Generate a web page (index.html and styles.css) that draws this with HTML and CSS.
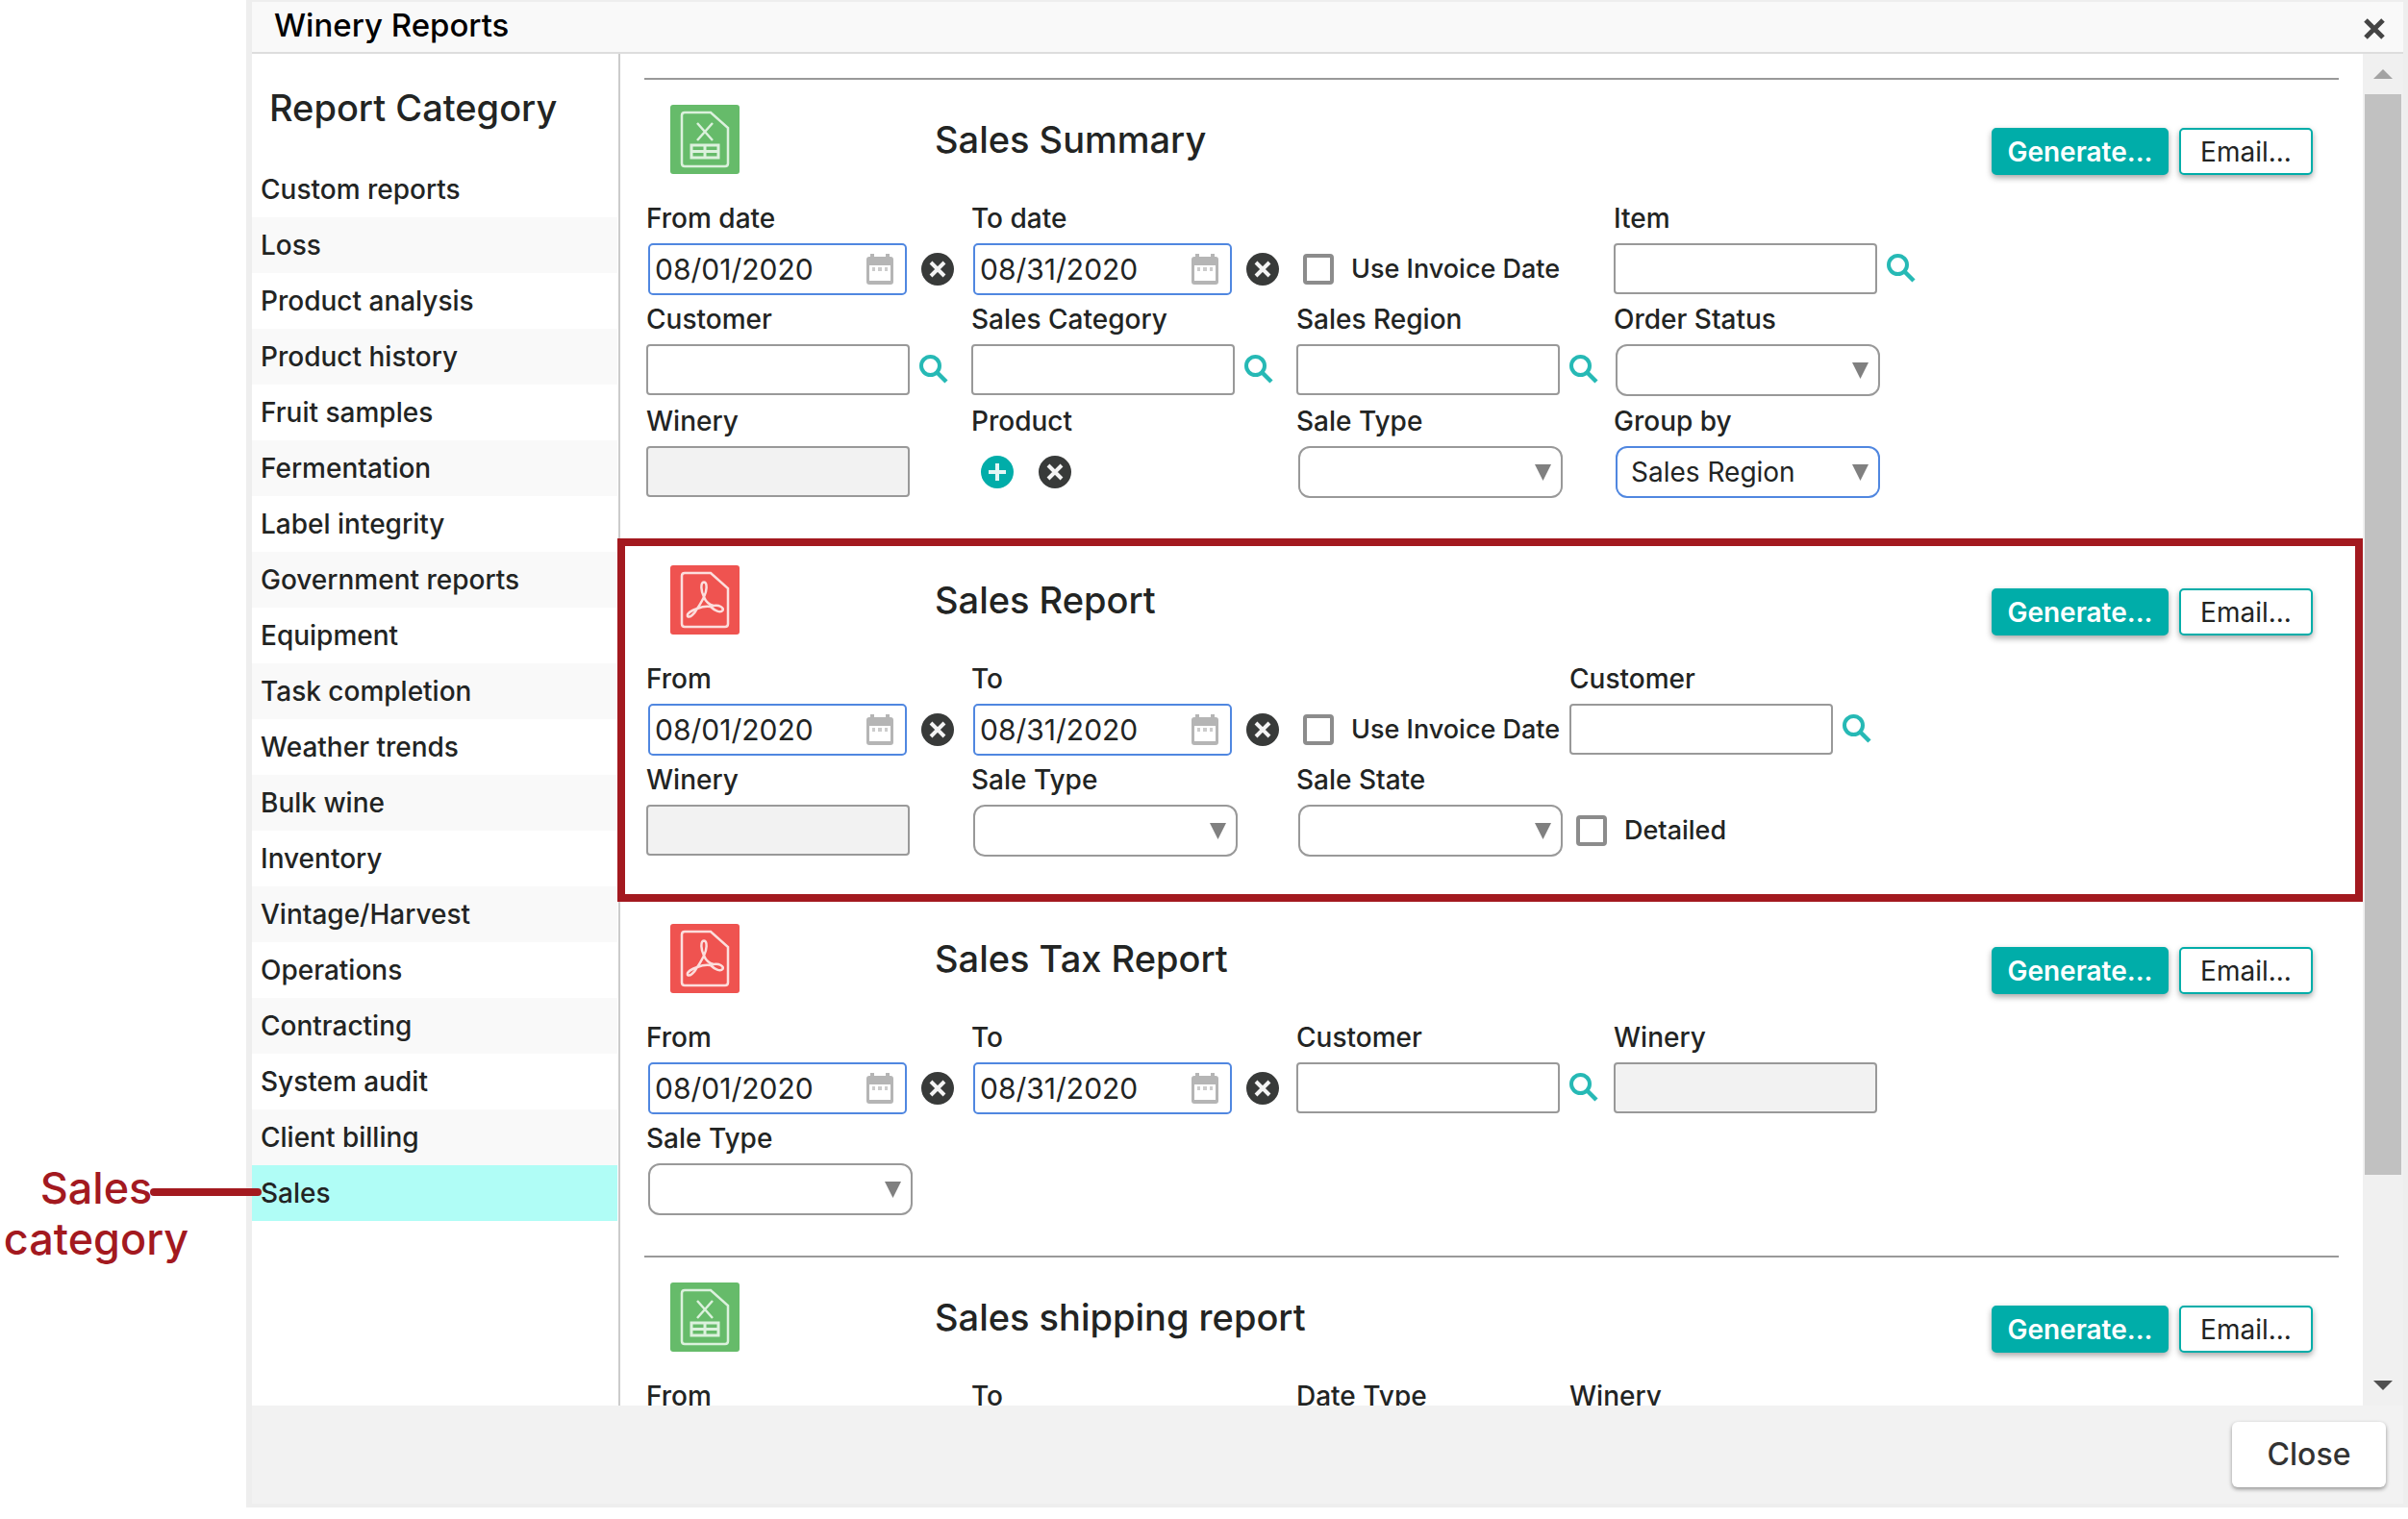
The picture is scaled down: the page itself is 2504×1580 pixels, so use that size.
FILE: index.html
```html
<!DOCTYPE html>
<html lang="en">
<head>
<meta charset="utf-8">
<title>Winery Reports</title>
<link rel="stylesheet" href="styles.css">
</head>
<body>
<svg class="sprite" aria-hidden="true">
  <symbol id="i-xls" viewBox="0 0 72 72">
    <rect width="72" height="72" rx="3" fill="#66bb6a"/>
    <g fill="none" stroke="#dcf1dd" stroke-width="2.500">
      <path d="M15 8H42L60 24V61Q60 64 57 64H15Q12 64 12 61V11Q12 8 15 8Z"/>
      <path d="M28 19L44 37M44 19L28 37"/>
      <path d="M22 42H50V55H22ZM22 48.500H50M36 42V55" stroke-width="3"/>
    </g>
  </symbol>
  <symbol id="i-pdf" viewBox="0 0 72 72">
    <rect width="72" height="72" rx="3" fill="#ef5350"/>
    <g fill="none" stroke="#fcdedd" stroke-width="2.500">
      <path d="M15 8H42L60 24V61Q60 64 57 64H15Q12 64 12 61V11Q12 8 15 8Z"/>
      <path d="M35 33C32 27 31 18 35 17.500C39 18 38 27 35 33C37 38 41 41 45 42C51 41 56 44 54.500 47C52 50 46 47 42 43C37 42 33 43 28 45C25 51 20 55 18 53C17 50 22 47 28 45C31 41 33 37 35 33Z"/>
    </g>
  </symbol>
  <symbol id="i-cal" viewBox="0 0 28 32">
    <path d="M4 0H8V3H20V0H24V3H25Q28 3 28 6V29Q28 32 25 32H3Q0 32 0 29V6Q0 3 3 3H4Z" fill="#b5b5b5"/>
    <path d="M3 12H25V28H3Z" fill="#fff"/>
    <path d="M6 14H9V18H6ZM12 14H16V18H12ZM19 14H22V18H19Z" fill="#ccc"/>
  </symbol>
  <symbol id="i-clear" viewBox="0 0 36 36">
    <circle cx="18" cy="18" r="17" fill="#383a39"/>
    <path d="M11 11L25 25M25 11L11 25" stroke="#f4f4f4" stroke-width="4"/>
  </symbol>
  <symbol id="i-add" viewBox="0 0 36 36">
    <circle cx="18" cy="18" r="17" fill="#00ada9"/>
    <path d="M18 9V27M9 18H27" stroke="#e4f7f6" stroke-width="4"/>
  </symbol>
  <symbol id="i-search" viewBox="0 0 30 30">
    <circle cx="11.500" cy="11.500" r="9.500" fill="none" stroke="#26b9b5" stroke-width="4"/>
    <path d="M18.500 18.500L28 28" stroke="#26b9b5" stroke-width="4.500"/>
  </symbol>
  <symbol id="i-x" viewBox="0 0 22 22">
    <path d="M2 2L20 20M20 2L2 20" stroke="#444" stroke-width="5"/>
  </symbol>
</svg>

<div class="page">
  <aside class="note">
    <p class="note-text">Sales<br>category</p>
    <span class="note-line"></span>
  </aside>

  <div class="dialog" role="dialog" aria-labelledby="dialog-title">
    <header class="dialog-head">
      <h1 id="dialog-title">Winery Reports</h1>
      <button class="icon-btn" type="button" aria-label="Close dialog"><svg class="ico-x"><use href="#i-x"/></svg></button>
    </header>

    <div class="dialog-body">
      <nav class="categories">
        <h2>Report Category</h2>
        <ul>
          <li><a href="#">Custom reports</a></li>
          <li><a href="#">Loss</a></li>
          <li><a href="#">Product analysis</a></li>
          <li><a href="#">Product history</a></li>
          <li><a href="#">Fruit samples</a></li>
          <li><a href="#">Fermentation</a></li>
          <li><a href="#">Label integrity</a></li>
          <li><a href="#">Government reports</a></li>
          <li><a href="#">Equipment</a></li>
          <li><a href="#">Task completion</a></li>
          <li><a href="#">Weather trends</a></li>
          <li><a href="#">Bulk wine</a></li>
          <li><a href="#">Inventory</a></li>
          <li><a href="#">Vintage/Harvest</a></li>
          <li><a href="#">Operations</a></li>
          <li><a href="#">Contracting</a></li>
          <li><a href="#">System audit</a></li>
          <li><a href="#">Client billing</a></li>
          <li class="current"><a href="#" aria-current="page">Sales</a></li>
        </ul>
      </nav>

      <main class="reports">
        <section class="report">
          <div class="report-head">
            <svg class="ico-file"><use href="#i-xls"/></svg>
            <h3>Sales Summary</h3>
            <div class="actions"><button class="btn primary" type="button">Generate...</button><button class="btn" type="button">Email...</button></div>
          </div>
          <div class="fields">
            <div class="field"><label for="a1">From date</label><div class="control"><span class="date"><input id="a1" type="text" value="08/01/2020"><svg class="ico-cal"><use href="#i-cal"/></svg></span><button class="icon-btn clear" type="button" aria-label="Clear"><svg class="ico-round"><use href="#i-clear"/></svg></button></div></div>
            <div class="field"><label for="a2">To date</label><div class="control"><span class="date"><input id="a2" type="text" value="08/31/2020"><svg class="ico-cal"><use href="#i-cal"/></svg></span><button class="icon-btn clear" type="button" aria-label="Clear"><svg class="ico-round"><use href="#i-clear"/></svg></button></div></div>
            <label class="check"><input type="checkbox">Use Invoice Date</label>
            <div class="field"><label for="a3">Item</label><div class="control"><input id="a3" class="text" type="text"><button class="icon-btn find" type="button" aria-label="Search"><svg class="ico-find"><use href="#i-search"/></svg></button></div></div>

            <div class="field"><label for="a4">Customer</label><div class="control"><input id="a4" class="text" type="text"><button class="icon-btn find" type="button" aria-label="Search"><svg class="ico-find"><use href="#i-search"/></svg></button></div></div>
            <div class="field"><label for="a5">Sales Category</label><div class="control"><input id="a5" class="text" type="text"><button class="icon-btn find" type="button" aria-label="Search"><svg class="ico-find"><use href="#i-search"/></svg></button></div></div>
            <div class="field"><label for="a6">Sales Region</label><div class="control"><input id="a6" class="text" type="text"><button class="icon-btn find" type="button" aria-label="Search"><svg class="ico-find"><use href="#i-search"/></svg></button></div></div>
            <div class="field"><label for="a7">Order Status</label><div class="control"><span class="drop"><select id="a7"><option></option></select></span></div></div>

            <div class="field"><label for="a8">Winery</label><div class="control"><input id="a8" class="text" type="text" disabled></div></div>
            <div class="field" role="group" aria-labelledby="a9"><span id="a9" class="label">Product</span><div class="control pair"><button class="icon-btn" type="button" aria-label="Add product"><svg class="ico-round"><use href="#i-add"/></svg></button><button class="icon-btn" type="button" aria-label="Clear products"><svg class="ico-round"><use href="#i-clear"/></svg></button></div></div>
            <div class="field"><label for="a10">Sale Type</label><div class="control"><span class="drop"><select id="a10"><option></option></select></span></div></div>
            <div class="field"><label for="a11">Group by</label><div class="control"><span class="drop set"><select id="a11"><option>Sales Region</option></select></span></div></div>
          </div>
        </section>

        <section class="report highlighted">
          <div class="report-head">
            <svg class="ico-file"><use href="#i-pdf"/></svg>
            <h3>Sales Report</h3>
            <div class="actions"><button class="btn primary" type="button">Generate...</button><button class="btn" type="button">Email...</button></div>
          </div>
          <div class="fields tight">
            <div class="field"><label for="b1">From</label><div class="control"><span class="date"><input id="b1" type="text" value="08/01/2020"><svg class="ico-cal"><use href="#i-cal"/></svg></span><button class="icon-btn clear" type="button" aria-label="Clear"><svg class="ico-round"><use href="#i-clear"/></svg></button></div></div>
            <div class="field"><label for="b2">To</label><div class="control"><span class="date"><input id="b2" type="text" value="08/31/2020"><svg class="ico-cal"><use href="#i-cal"/></svg></span><button class="icon-btn clear" type="button" aria-label="Clear"><svg class="ico-round"><use href="#i-clear"/></svg></button></div></div>
            <label class="check"><input type="checkbox">Use Invoice Date</label>
            <div class="field"><label for="b3">Customer</label><div class="control"><input id="b3" class="text" type="text"><button class="icon-btn find" type="button" aria-label="Search"><svg class="ico-find"><use href="#i-search"/></svg></button></div></div>

            <div class="field"><label for="b4">Winery</label><div class="control"><input id="b4" class="text" type="text" disabled></div></div>
            <div class="field"><label for="b5">Sale Type</label><div class="control"><span class="drop"><select id="b5"><option></option></select></span></div></div>
            <div class="field"><label for="b6">Sale State</label><div class="control"><span class="drop"><select id="b6"><option></option></select></span></div></div>
            <label class="check"><input type="checkbox">Detailed</label>
          </div>
        </section>

        <section class="report">
          <div class="report-head">
            <svg class="ico-file"><use href="#i-pdf"/></svg>
            <h3>Sales Tax Report</h3>
            <div class="actions"><button class="btn primary" type="button">Generate...</button><button class="btn" type="button">Email...</button></div>
          </div>
          <div class="fields">
            <div class="field"><label for="c1">From</label><div class="control"><span class="date"><input id="c1" type="text" value="08/01/2020"><svg class="ico-cal"><use href="#i-cal"/></svg></span><button class="icon-btn clear" type="button" aria-label="Clear"><svg class="ico-round"><use href="#i-clear"/></svg></button></div></div>
            <div class="field"><label for="c2">To</label><div class="control"><span class="date"><input id="c2" type="text" value="08/31/2020"><svg class="ico-cal"><use href="#i-cal"/></svg></span><button class="icon-btn clear" type="button" aria-label="Clear"><svg class="ico-round"><use href="#i-clear"/></svg></button></div></div>
            <div class="field"><label for="c3">Customer</label><div class="control"><input id="c3" class="text" type="text"><button class="icon-btn find" type="button" aria-label="Search"><svg class="ico-find"><use href="#i-search"/></svg></button></div></div>
            <div class="field"><label for="c4">Winery</label><div class="control"><input id="c4" class="text" type="text" disabled></div></div>

            <div class="field"><label for="c5">Sale Type</label><div class="control"><span class="drop"><select id="c5"><option></option></select></span></div></div>
          </div>
        </section>

        <section class="report">
          <div class="report-head">
            <svg class="ico-file"><use href="#i-xls"/></svg>
            <h3>Sales shipping report</h3>
            <div class="actions"><button class="btn primary" type="button">Generate...</button><button class="btn" type="button">Email...</button></div>
          </div>
          <div class="fields tight">
            <div class="field"><label for="d1">From</label><div class="control"><span class="date"><input id="d1" type="text"></span></div></div>
            <div class="field"><label for="d2">To</label><div class="control"><span class="date"><input id="d2" type="text"></span></div></div>
            <div class="field"><label for="d3">Date Type</label><div class="control"><span class="drop"><select id="d3"><option></option></select></span></div></div>
            <div class="field"><label for="d4">Winery</label><div class="control"><input id="d4" class="text" type="text" disabled></div></div>
          </div>
        </section>
      </main>

      <div class="scrollbar" aria-hidden="true">
        <span class="arrow up"></span>
        <span class="track"><span class="thumb"></span></span>
        <span class="arrow down"></span>
      </div>
    </div>

    <footer class="dialog-foot"><button class="close-btn" type="button">Close</button></footer>
  </div>
</div>
</body>
</html>
```
FILE: styles.css
```css
* { box-sizing: border-box; }

body {
  margin: 0;
  background: #fff;
  color: #222423;
  font: 500 28px/36px Inter, "Liberation Sans", sans-serif;
}

h1, h2, h3, p, ul { margin: 0; padding: 0; font-weight: 500; }
ul { list-style: none; }
a { color: inherit; text-decoration: none; }
svg { display: block; }
input, select, button { margin: 0; font: inherit; color: inherit; }
.sprite { position: absolute; width: 0; height: 0; }

.page {
  display: grid;
  grid-template-columns: 256px 1fr;
  height: 100vh;
  padding-bottom: 12px;
}

/* callout beside the dialog */
.note { position: relative; z-index: 2; padding: 1209px 56px 0 0; }
.note-text {
  color: #a3191f;
  font-size: 45px;
  line-height: 53px;
  text-align: center;
}
.note-line {
  position: absolute;
  top: 1236px;
  left: 156px;
  width: 116px;
  height: 8px;
  border-radius: 4px;
  background: #a3191f;
}

.dialog {
  display: flex;
  flex-direction: column;
  min-width: 0;
  min-height: 0;
  border: solid #eee;
  border-width: 2px 5px 4px 6px;
}
.dialog-head {
  display: flex;
  flex: none;
  align-items: center;
  justify-content: space-between;
  height: 54px;
  padding: 4px 19px 0 23px;
  border-bottom: 2px solid #ddd;
  background: #f9f9f9;
}
h1 { padding-bottom: 8px; color: #000; font-size: 33px; line-height: 40px; }
.ico-x { width: 22px; height: 22px; }
.icon-btn { flex: none; padding: 0; border: 0; background: none; }

.dialog-body { display: flex; flex: 1; min-height: 0; overflow: hidden; }

.categories { flex: none; width: 383px; padding-right: 1px; border-right: 2px solid #ccc; }
h2 { padding: 32px 18px; font-size: 38px; line-height: 48px; }
.categories li { padding: 0 9px; line-height: 58px; }
.categories li:nth-child(even) { background: #f9f9f9; }
.categories .current { background: #b0fdf6; }
.categories a { display: block; }

.reports { flex: 1; min-width: 0; padding: 25px 25px 0; }
.report { position: relative; padding-bottom: 41px; border-top: 2px solid #999; }
.highlighted::after {
  content: "";
  position: absolute;
  inset: -2px -25px -5px -28px;
  border: 8px solid #a3191f;
  pointer-events: none;
  z-index: 1;
}
.report-head { display: flex; align-items: flex-start; height: 119px; padding: 26px 27px 0; }
.ico-file { width: 72px; height: 72px; }
h3 { margin-left: 203px; font-size: 38px; line-height: 72px; }
.actions { display: flex; gap: 11px; margin: 24px 0 0 auto; }
.btn {
  width: 139px;
  height: 49px;
  padding: 0;
  border: 2px solid #00ada9;
  border-radius: 5px;
  background: #fff;
  box-shadow: 0 3px 6px rgba(0, 0, 0, .35);
  font-weight: 400;
}
.btn.primary { width: 184px; background: #00ada9; color: #fff; font-weight: 600; }

.fields { display: grid; grid-template-columns: 338px 338px 330px auto; padding-left: 2px; }
.fields.tight { grid-template-columns: 338px 338px 284px auto; }
.field label, .label { display: block; line-height: 51px; }
.control { display: flex; align-items: flex-start; height: 54px; }

.text {
  width: 274px;
  height: 53px;
  border: 2px solid #999;
  border-radius: 4px;
  background: #fff;
}
.text:disabled { background: #f2f2f2; }
.find { margin: 11px 0 0 10px; }
.ico-find { width: 30px; height: 30px; }

.date {
  display: flex;
  align-items: center;
  width: 269px;
  height: 54px;
  margin-left: 2px;
  padding: 0 12px 0 5px;
  border: 2px solid #5087e0;
  border-radius: 5px;
  font-size: 30px;
  font-weight: 400;
}
.date input { flex: 1; min-width: 0; padding: 0; border: 0; background: none; }
.ico-cal { flex: none; width: 28px; height: 32px; }
.clear { margin: 9px 0 0 14px; }
.ico-round { width: 36px; height: 36px; }
.pair { align-items: center; gap: 24px; padding-left: 9px; }

.drop { position: relative; width: 275px; height: 54px; margin: 0 0 1px 2px; }
.drop::after {
  content: "";
  position: absolute;
  top: 19px;
  right: 12px;
  width: 17px;
  height: 17px;
  background: #808080;
  clip-path: polygon(0 0, 100% 0, 50% 100%);
  pointer-events: none;
}
.drop select {
  width: 100%;
  height: 100%;
  padding: 0 40px 0 14px;
  border: 2px solid #999;
  border-radius: 12px;
  background: #fff;
  font-weight: 400;
  appearance: none;
}
.drop.set select { border-color: #5087e0; }
.control:has(.drop) { height: 55px; }

.check {
  display: flex;
  align-items: center;
  gap: 18px;
  height: 54px;
  margin: 51px 0 0 7px;
  font-size: 27px;
  white-space: nowrap;
}
.check input {
  flex: none;
  width: 32px;
  height: 32px;
  border: 4px solid #8c8c8c;
  border-radius: 4px;
  background: #fff;
  appearance: none;
}

.scrollbar { display: flex; flex: none; flex-direction: column; width: 42px; background: #f0f0f0; }
.arrow { flex: none; height: 42px; display: grid; place-items: center; }
.arrow::before { content: ""; width: 20px; height: 10px; }
.up::before { background: #a3a3a3; clip-path: polygon(50% 0, 100% 100%, 0 100%); }
.down::before { background: #505050; clip-path: polygon(0 0, 100% 0, 50% 100%); }
.track { flex: 1; padding: 0 2px; }
.thumb { display: block; height: 85%; background: #c1c1c1; }

.dialog-foot {
  display: flex;
  flex: none;
  align-items: center;
  justify-content: flex-end;
  height: 102px;
  padding-right: 18px;
  background: #f2f2f2;
}
.close-btn {
  width: 160px;
  height: 68px;
  border: 0;
  border-radius: 6px;
  background: #fff;
  box-shadow: 0 2px 4px rgba(0, 0, 0, .4);
  color: #333;
  font-size: 32px;
}
```
